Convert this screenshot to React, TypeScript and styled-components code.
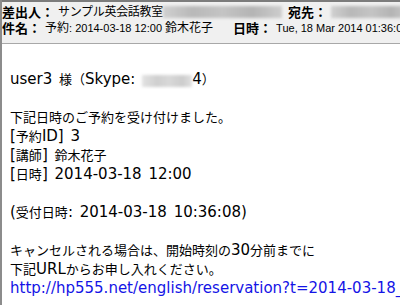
import styled, { createGlobalStyle } from 'styled-components';

const GlobalStyle = createGlobalStyle`
  html, body {
    margin: 0;
    padding: 0;
    background: #ffffff;
  }
`;

// Fenster der Mailansicht
const Frame = styled.div`
  width: 400px;
  height: 305px;
  overflow: hidden;
  box-sizing: border-box;
  border-left: 2px solid #8c8c8c;
  background: #ffffff;
`;

// Kopfbereich mit Absender, Betreff usw.
const Header = styled.div`
  background: #f0f0f0;
  border-top: 2px solid #7c7c7c;
  border-bottom: 1px solid #a8a8a8;
  padding: 2px 0 7px 0;
  display: flex;
  flex-direction: column;
`;

const HeaderRow = styled.div`
  display: flex;
  align-items: center;
  height: 16px;
  line-height: 16px;
  white-space: nowrap;
`;

const Label = styled.span<{ $gapBefore?: number }>`
  font-family: 'Noto Sans CJK JP', sans-serif;
  font-weight: 700;
  font-size: 13px;
  line-height: 16px;
  color: #000;
  margin-left: ${({ $gapBefore }) => $gapBefore ?? 0}px;
  margin-right: 4px;
  flex-shrink: 0;
`;

const Value = styled.span<{ $tight?: boolean }>`
  font-family: 'Liberation Sans', 'Noto Sans CJK JP', sans-serif;
  font-size: 11px;
  line-height: 16px;
  color: #000;
  letter-spacing: ${({ $tight }) => ($tight ? '-0.3px' : '0')};
  flex-shrink: 0;
`;

const Jp = styled.span`
  font-size: 12px;
`;

// unkenntlich gemachte Adresse
const Blurred = styled.span<{ $w: number; $light?: boolean }>`
  display: inline-block;
  width: ${({ $w }) => $w}px;
  height: 12px;
  flex-shrink: 0;
  background: ${({ $light }) =>
    $light
      ? 'linear-gradient(90deg, #e2e2e2, #cfcfcf 30%, #d8d8d8 55%, #cccccc 80%, #e0e0e0)'
      : 'linear-gradient(90deg, #d0d0d0, #b8b8b8 25%, #c4c4c4 50%, #b4b4b4 75%, #cdcdcd)'};
  filter: blur(1.5px);
  vertical-align: middle;
`;

const Body = styled.div`
  padding: 26px 0 0 8px;
  font-family: 'DejaVu Sans', 'Noto Sans CJK JP', sans-serif;
  font-size: 13px;
  line-height: 19px;
  color: #000;
`;

const Line = styled.div`
  height: 19px;
  white-space: nowrap;
`;

const Lat = styled.span`
  font-size: 15px;
  line-height: 19px;
  word-spacing: 2px;
`;

const Link = styled.a`
  color: #1414e6;
  text-decoration: none;
  font-size: 15px;
`;

export default function App() {
  return (
    <>
      <GlobalStyle />
      <Frame>
        <Header>
          <HeaderRow>
            <Label $gapBefore={0}>差出人：</Label>
            <Value $tight>
              <Jp>サンプル英会話教室</Jp>
            </Value>
            <Blurred $w={119} />
            <Label $gapBefore={6}>宛先：</Label>
            <Blurred $w={80} />
          </HeaderRow>
          <HeaderRow>
            <Label>件名：</Label>
            <Value>
              <Jp>予約</Jp>: 2014-03-18 12:00 <Jp>鈴木花子</Jp>
            </Value>
            <Label $gapBefore={20}>日時：</Label>
            <Value>Tue, 18 Mar 2014 01:36:05 +0900</Value>
          </HeaderRow>
        </Header>
        <Body>
          <Line>
            <Lat>user3 </Lat>様（<Lat>Skype: </Lat>
            <Blurred $w={50} $light />
            <Lat>4</Lat>）
          </Line>
          <Line />
          <Line>下記日時のご予約を受け付けました。</Line>
          <Line>
            <Lat>[</Lat>予約<Lat>ID] 3</Lat>
          </Line>
          <Line>
            <Lat>[</Lat>講師<Lat>] </Lat>鈴木花子
          </Line>
          <Line>
            <Lat>[</Lat>日時<Lat>] 2014-03-18 12:00</Lat>
          </Line>
          <Line />
          <Line>
            <Lat>(</Lat>受付日時<Lat>: 2014-03-18 10:36:08)</Lat>
          </Line>
          <Line />
          <Line>
            キャンセルされる場合は、開始時刻の<Lat>30</Lat>分前までに
          </Line>
          <Line>
            下記<Lat>URL</Lat>からお申し入れください。
          </Line>
          <Line>
            <Link href="#">http://hp555.net/english/reservation?t=2014-03-18_1200</Link>
          </Line>
        </Body>
      </Frame>
    </>
  );
}
